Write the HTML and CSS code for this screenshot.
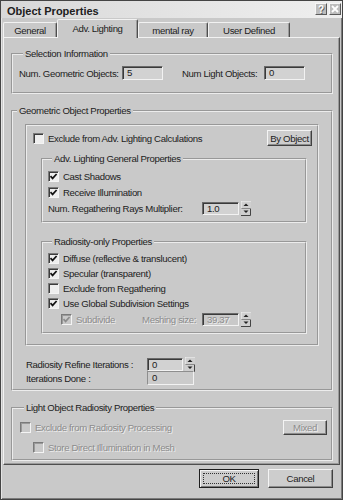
FILE: index.html
```html
<!DOCTYPE html>
<html>

<head lang="en">
    <meta charset="UTF-8">
    <title>Object Properties</title>
    <link rel="stylesheet" href="styles.css">
</head>

<body>
    <div class="window">
        <div class="titlebar">
            <span class="title">Object Properties</span>
            <span class="tb-btns">
                <span class="tb-btn">?</span>
                <span class="tb-btn">
                    <svg width="8" height="8" viewBox="0 0 8 8"><path d="M1 1 L7 7 M7 1 L1 7" stroke="#fff" stroke-width="1.8"/></svg>
                </span>
            </span>
        </div>

        <div class="tabs">
            <span class="tab t-general">General</span>
            <span class="tab tab-active t-adv">Adv. Lighting</span>
            <span class="tab t-mental">mental ray</span>
            <span class="tab t-user">User Defined</span>
        </div>

        <div class="panel">
            <!-- Selection Information -->
            <fieldset class="group g-sel">
                <legend>Selection Information</legend>
                <div class="row sel-row">
                    <span class="lbl w-geo">Num. Geometric Objects:</span>
                    <span class="field w-41">5</span>
                    <span class="lbl w-light">Num Light Objects:</span>
                    <span class="field w-41">0</span>
                </div>
            </fieldset>

            <!-- Geometric Object Properties -->
            <fieldset class="group g-geo">
                <legend>Geometric Object Properties</legend>
                <div class="inner-box">
                    <div class="row ex-row">
                        <label class="chk-line"><span class="chk"></span>Exclude from Adv. Lighting Calculations</label>
                        <span class="btn btn-obj">By Object</span>
                    </div>

                    <fieldset class="group g-adv">
                        <legend>Adv. Lighting General Properties</legend>
                        <div class="row r16"><label class="chk-line"><span class="chk on"><svg width="9" height="9" viewBox="0 0 9 9"><path d="M1.5 4.2 L3.6 6.4 L7.6 2" /></svg></span>Cast Shadows</label></div>
                        <div class="row r16"><label class="chk-line"><span class="chk on"><svg width="9" height="9" viewBox="0 0 9 9"><path d="M1.5 4.2 L3.6 6.4 L7.6 2" /></svg></span>Receive Illumination</label></div>
                        <div class="row r16">
                            <span class="lbl w-rays">Num. Regathering Rays Multiplier:</span>
                            <span class="field w-37">1.0</span>
                            <svg class="spin" width="10" height="15" viewBox="0 0 10 15">
                                <path d="M0 7 V0 H10" stroke="#f4f4f4" fill="none"/>
                                <path d="M0 14.5 H9.5 V7.5" stroke="#444" fill="none"/>
                                <path d="M0.5 7.5 H9.5" stroke="#888"/>
                                <polygon points="2.5,5 7.5,5 5,2.5" fill="#222"/>
                                <polygon points="2.5,9.5 7.5,9.5 5,12" fill="#222"/>
                            </svg>
                        </div>
                    </fieldset>

                    <fieldset class="group g-rad">
                        <legend>Radiosity-only Properties</legend>
                        <div class="row r15"><label class="chk-line"><span class="chk on"><svg width="9" height="9" viewBox="0 0 9 9"><path d="M1.5 4.2 L3.6 6.4 L7.6 2" /></svg></span>Diffuse (reflective &amp; translucent)</label></div>
                        <div class="row r15"><label class="chk-line"><span class="chk on"><svg width="9" height="9" viewBox="0 0 9 9"><path d="M1.5 4.2 L3.6 6.4 L7.6 2" /></svg></span>Specular (transparent)</label></div>
                        <div class="row r15"><label class="chk-line"><span class="chk"></span>Exclude from Regathering</label></div>
                        <div class="row r15"><label class="chk-line"><span class="chk on"><svg width="9" height="9" viewBox="0 0 9 9"><path d="M1.5 4.2 L3.6 6.4 L7.6 2" /></svg></span>Use Global Subdivision Settings</label></div>
                        <div class="row r17 sub-row">
                            <label class="chk-line off w-sub"><span class="chk on"><svg width="9" height="9" viewBox="0 0 9 9"><path d="M1.5 4.2 L3.6 6.4 L7.6 2" /></svg></span>Subdivide</label>
                            <span class="lbl off w-mesh">Meshing size:</span>
                            <span class="field w-37 off-field">39.37</span>
                            <svg class="spin" width="10" height="15" viewBox="0 0 10 15">
                                <path d="M0 7 V0 H10" stroke="#f4f4f4" fill="none"/>
                                <path d="M0 14.5 H9.5 V7.5" stroke="#444" fill="none"/>
                                <path d="M0.5 7.5 H9.5" stroke="#888"/>
                                <polygon points="2.5,5 7.5,5 5,2.5" fill="#222"/>
                                <polygon points="2.5,9.5 7.5,9.5 5,12" fill="#222"/>
                            </svg>
                        </div>
                    </fieldset>
                </div>

                <div class="iter">
                    <div class="row r14">
                        <span class="lbl w-iter">Radiosity Refine Iterations :</span>
                        <span class="field w-36">0</span>
                        <svg class="spin" width="10" height="15" viewBox="0 0 10 15">
                            <path d="M0 7 V0 H10" stroke="#f4f4f4" fill="none"/>
                            <path d="M0 14.5 H9.5 V7.5" stroke="#444" fill="none"/>
                            <path d="M0.5 7.5 H9.5" stroke="#888"/>
                            <polygon points="2.5,5 7.5,5 5,2.5" fill="#222"/>
                            <polygon points="2.5,9.5 7.5,9.5 5,12" fill="#222"/>
                        </svg>
                    </div>
                    <div class="row r14">
                        <span class="lbl w-iter">Iterations Done :</span>
                        <span class="field flat w-47">0</span>
                    </div>
                </div>
            </fieldset>

            <!-- Light Object Radiosity Properties -->
            <fieldset class="group g-light">
                <legend>Light Object Radiosity Properties</legend>
                <div class="row r16 ex-row">
                    <label class="chk-line off"><span class="chk"></span>Exclude from Radiosity Processing</label>
                    <span class="btn btn-mixed off">Mixed</span>
                </div>
                <div class="row r16 store-row">
                    <label class="chk-line off"><span class="chk"></span>Store Direct Illumination in Mesh</label>
                </div>
            </fieldset>
        </div>

        <div class="buttons">
            <span class="btn btn-ok"><span class="focus">OK</span></span>
            <span class="btn btn-cancel">Cancel</span>
        </div>
    </div>
</body>

</html>
```

FILE: styles.css
```css
* {
    margin: 0;
    padding: 0;
    box-sizing: border-box;
}

body {
    background-color: #c9c9c9;
    font-family: "Liberation Sans", Arial, sans-serif;
    font-size: 9.6px;
    letter-spacing: -0.35px;
    color: #1c1c1c;
}

.window {
    width: 343px;
    height: 500px;
    border: 1px solid #444;
    box-shadow: inset 1px 1px 0 #e4e4e4, inset -1px -1px 0 #7a7a7a;
    display: flex;
    flex-direction: column;
}

/* title bar */
.titlebar {
    height: 17px;
    display: flex;
    align-items: center;
    justify-content: space-between;
    padding: 2px 1px 0 6px;
    background: linear-gradient(to right, #d8d8d8, #efefef);
}

.title {
    font: bold 11px "Liberation Sans", Arial, sans-serif;
    letter-spacing: 0;
    color: #202020;
}

.tb-btns {
    display: flex;
    gap: 2px;
    margin-top: -3px;
}

.tb-btn {
    width: 12px;
    height: 12px;
    display: flex;
    align-items: center;
    justify-content: center;
    border: 1px solid;
    border-color: #f6f6f6 #5a5a5a #5a5a5a #f6f6f6;
    background: #bdbdbd;
    font: bold 10px "Liberation Sans", Arial, sans-serif;
    color: #fff;
    text-shadow: 1px 1px 0 #666;
}

/* tabs */
.tabs {
    height: 19px;
    margin: 0 2px;
    display: flex;
    align-items: flex-end;
}

.tab {
    flex: none;
    height: 15px;
    display: flex;
    align-items: center;
    justify-content: center;
    border: 1px solid;
    border-bottom: 0;
    border-color: #f2f2f2 #4e4e4e transparent #f2f2f2;
    border-radius: 2px 2px 0 0;
    box-shadow: inset -1px 0 0 #9a9a9a;
    padding-top: 1px;
    white-space: nowrap;
}

.tab-active {
    height: 19px;
    margin-bottom: -1px;
    position: relative;
    z-index: 1;
    background: #c9c9c9;
    padding-bottom: 2px;
}

.t-general { width: 54px; }
.t-adv { width: 81px; }
.t-mental { width: 70px; }
.t-user { width: 82px; }

/* tab page */
.panel {
    margin: 0 2px;
    border: 1px solid;
    border-color: #f2f2f2 #4e4e4e #4e4e4e #f2f2f2;
    box-shadow: inset -1px -1px 0 #9a9a9a;
    padding: 0 6px 3px 7px;
}

.group {
    border: 2px groove #ececec;
    min-width: 0;
}

.group legend {
    margin-left: 4px;
    padding: 0 2px;
    line-height: 12px;
}

.row {
    display: flex;
    align-items: center;
}

.r14 { height: 14px; }
.r15 { height: 15px; }
.r16 { height: 16px; }
.r17 { height: 17px; }

.lbl {
    flex: none;
    white-space: nowrap;
}

.field {
    flex: none;
    height: 14px;
    line-height: 12px;
    border: 1px solid;
    border-color: #6a6a6a #f2f2f2 #f2f2f2 #6a6a6a;
    box-shadow: inset 1px 1px 0 #3a3a3a;
    background: #d2d2d2;
    padding-left: 4px;
}

.field.flat {
    box-shadow: none;
    border-color: #8e8e8e #f2f2f2 #f2f2f2 #8e8e8e;
    background: #cbcbcb;
}

.spin {
    flex: none;
    margin-left: 2px;
    background: #cfcfcf;
}

.off,
.off-field {
    color: #8c8c8c;
    text-shadow: 1px 1px 0 #ededed;
}

.off-field {
    background: #c9c9c9;
}

/* checkbox */
.chk-line {
    flex: none;
    display: flex;
    align-items: center;
    white-space: nowrap;
}

.chk {
    flex: none;
    width: 11px;
    height: 11px;
    margin-right: 4px;
    border: 1px solid;
    border-color: #7a7a7a #f4f4f4 #f4f4f4 #7a7a7a;
    box-shadow: inset 1px 1px 0 #3c3c3c;
    background: #eeeeee;
    display: flex;
}

.chk svg path {
    stroke: #111;
    stroke-width: 1.7;
    fill: none;
}

.off .chk {
    background: #c9c9c9;
    box-shadow: inset 1px 1px 0 #9a9a9a;
}

.off .chk svg path {
    stroke: #8c8c8c;
}

/* buttons */
.btn {
    flex: none;
    display: flex;
    align-items: center;
    justify-content: center;
    white-space: nowrap;
    border: 1px solid;
    border-color: #f4f4f4 #404040 #404040 #f4f4f4;
    box-shadow: inset -1px -1px 0 #8c8c8c;
    background: #cdcdcd;
}

/* Selection Information */
.g-sel {
    margin-top: 10px;
    padding: 6px 0 12px 6px;
}

.sel-row {
    height: 14px;
}

.w-geo { width: 103px; }
.w-light { width: 82px; margin-left: 19px; }
.w-41 { width: 41px; }
.w-37 { width: 37px; height: 13px; }
.w-36 { width: 36px; height: 13px; }
.w-47 { width: 47px; }

/* Geometric Object Properties */
.g-geo {
    margin-top: 11px;
    padding: 0 0 4px 0;
}

.inner-box {
    margin: 7px 12px 0 12px;
    border: 2px groove #ececec;
    padding: 4px 5px 10px 6px;
}

.ex-row {
    height: 16px;
    justify-content: space-between;
}

.btn-obj {
    width: 45px;
    height: 16px;
}

.g-adv {
    margin: 7px 5px 0 8px;
    padding: 3px 0 5px 5px;
}

.w-rays { width: 154px; }

.g-rad {
    margin: 13px 5px 0 8px;
    padding: 3px 0 4px 5px;
}

.sub-row {
    padding-left: 13px;
}

.w-sub { width: 81px; }
.w-mesh { width: 60px; }

.iter {
    margin-top: 11px;
    padding-left: 13px;
}

.w-iter { width: 121px; }

/* Light Object Radiosity Properties */
.g-light {
    margin-top: 11px;
    padding: 5px 4px 4px 7px;
}

.btn-mixed {
    width: 44px;
    height: 15px;
}

.store-row {
    margin-top: 4px;
    padding-left: 13px;
}

/* dialog buttons */
.buttons {
    display: flex;
    justify-content: flex-end;
    gap: 9px;
    margin-top: 4px;
    padding-right: 9px;
}

.btn-ok,
.btn-cancel {
    height: 19px;
}

.btn-ok {
    width: 60px;
    border-color: #1e1e1e;
    box-shadow: inset 1px 1px 0 #f4f4f4, inset -1px -1px 0 #7a7a7a;
    padding: 3px;
}

.focus {
    width: 100%;
    height: 100%;
    display: flex;
    align-items: center;
    justify-content: center;
    border: 1px dotted #333;
}

.btn-cancel {
    width: 65px;
}
```
